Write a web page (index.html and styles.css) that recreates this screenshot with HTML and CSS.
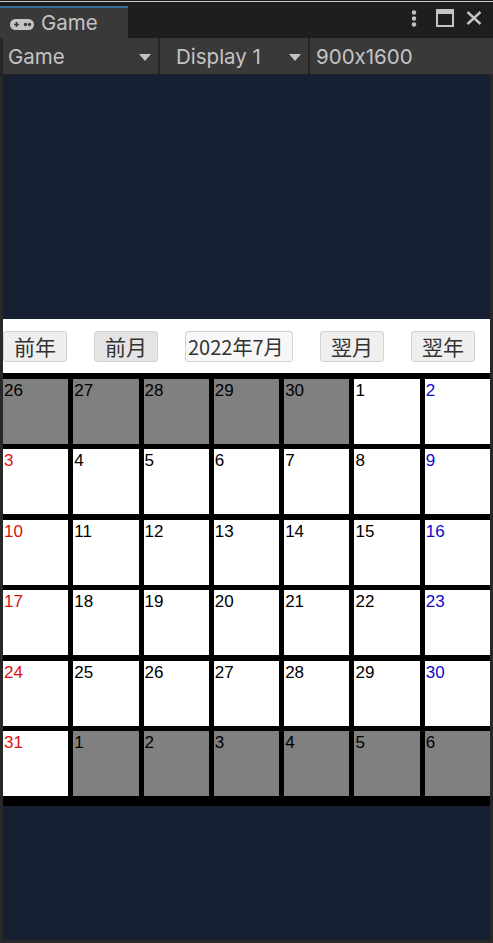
FILE: index.html
```html
<!DOCTYPE html>
<html lang="ja">
<head>
<meta charset="utf-8">
<title>Game</title>
<link rel="stylesheet" href="styles.css">
</head>
<body>
<div class="window">
  <div class="topline"></div>
  <div class="tabbar">
    <div class="tab">
      <svg class="pad" width="24" height="11" viewBox="0 0 24 11">
        <rect x="0" y="0" width="24" height="11" rx="5.5" fill="#c4c4c4"/>
        <path d="M4 5.5h5M6.5 3v5" stroke="#393939" stroke-width="1.6"/>
        <circle cx="15.5" cy="5.5" r="1.7" fill="#393939"/>
        <circle cx="19.5" cy="5.5" r="1.7" fill="#393939"/>
      </svg>
      <span class="tab-label">Game</span>
    </div>
    <div class="tab-actions">
      <svg class="kebab" width="6" height="17" viewBox="0 0 6 17">
        <circle cx="3" cy="2.5" r="2.2" fill="#c4c4c4"/>
        <circle cx="3" cy="8.5" r="2.2" fill="#c4c4c4"/>
        <circle cx="3" cy="14.5" r="2.2" fill="#c4c4c4"/>
      </svg>
      <svg class="maxi" width="18" height="18" viewBox="0 0 18 18">
        <rect x="1" y="1" width="16" height="16" fill="none" stroke="#c4c4c4" stroke-width="2"/>
        <rect x="1" y="1" width="16" height="4" fill="#c4c4c4"/>
      </svg>
      <svg class="close" width="16" height="14" viewBox="0 0 16 14">
        <path d="M1.5 1L14.5 13M14.5 1L1.5 13" stroke="#c4c4c4" stroke-width="2.4"/>
      </svg>
    </div>
  </div>
  <div class="toolbar">
    <div class="dd dd-game"><span>Game</span><span class="arrow"></span></div>
    <div class="dd dd-display"><span>Display 1</span><span class="arrow"></span></div>
    <div class="res">900x1600</div>
  </div>
  <div class="view">
    <div class="sky"></div>
    <div class="nav">
      <div class="btn">前年</div>
      <div class="btn hover">前月</div>
      <div class="field">2022年7月</div>
      <div class="btn">翌月</div>
      <div class="btn">翌年</div>
    </div>
    <div class="grid">
      <div class="cell off">26</div>
      <div class="cell off">27</div>
      <div class="cell off">28</div>
      <div class="cell off">29</div>
      <div class="cell off">30</div>
      <div class="cell">1</div>
      <div class="cell sat">2</div>

      <div class="cell sun">3</div>
      <div class="cell">4</div>
      <div class="cell">5</div>
      <div class="cell">6</div>
      <div class="cell">7</div>
      <div class="cell">8</div>
      <div class="cell sat">9</div>

      <div class="cell sun">10</div>
      <div class="cell">11</div>
      <div class="cell">12</div>
      <div class="cell">13</div>
      <div class="cell">14</div>
      <div class="cell">15</div>
      <div class="cell sat">16</div>

      <div class="cell sun">17</div>
      <div class="cell">18</div>
      <div class="cell">19</div>
      <div class="cell">20</div>
      <div class="cell">21</div>
      <div class="cell">22</div>
      <div class="cell sat">23</div>

      <div class="cell sun">24</div>
      <div class="cell">25</div>
      <div class="cell">26</div>
      <div class="cell">27</div>
      <div class="cell">28</div>
      <div class="cell">29</div>
      <div class="cell sat">30</div>

      <div class="cell sun">31</div>
      <div class="cell off">1</div>
      <div class="cell off">2</div>
      <div class="cell off">3</div>
      <div class="cell off">4</div>
      <div class="cell off">5</div>
      <div class="cell off">6</div>
    </div>
  </div>
</div>
</body>
</html>
```

FILE: styles.css
```css
* { box-sizing: border-box; }
html, body { margin: 0; padding: 0; background: #282828; }

.window {
  width: 493px;
  height: 943px;
  display: flex;
  flex-direction: column;
  background: #282828;
  overflow: hidden;
  font-family: Inter, "Noto Sans", sans-serif;
  font-feature-settings: "calt" 0;
  color: #c4c4c4;
}

.topline {
  height: 2px;
  border-top: 1px solid #1c1c1c;
  background: #c9c9c9;
  flex: none;
}

.tabbar {
  height: 36px;
  flex: none;
  background: #1e1e1e;
  display: flex;
  align-items: flex-end;
}

.tab {
  width: 128px;
  height: 32px;
  background: #393939;
  border-top: 2px solid #3a6c9e;
  display: flex;
  align-items: center;
  padding-left: 10px;
  gap: 7px;
}
.pad { flex: none; margin-top: 2px; }
.tab-label { font-size: 20.5px; line-height: 1; margin-top: 1px; }

.tab-actions {
  margin-left: auto;
  align-self: stretch;
  display: flex;
  align-items: center;
  padding-right: 11px;
  padding-bottom: 4px;
}
.kebab { margin-right: 19px; }
.maxi { margin-right: 12px; }

.toolbar {
  height: 37px;
  flex: none;
  background: #393939;
  border-left: 3px solid #262626;
  border-bottom: 1px solid #232323;
  display: flex;
  font-size: 20.5px;
  line-height: 1;
}

.dd {
  display: flex;
  align-items: center;
  border-right: 2px solid #252525;
  padding-top: 2px;
}
.dd-game { width: 157px; padding-left: 5px; }
.dd-display { width: 150px; padding-left: 16px; }
.dd span:first-child { flex: 1; }
.arrow {
  width: 0;
  height: 0;
  border-left: 6px solid transparent;
  border-right: 6px solid transparent;
  border-top: 7px solid #c4c4c4;
  margin-right: 7px;
}
.res {
  display: flex;
  align-items: center;
  padding-left: 6px;
  padding-top: 2px;
}

.view {
  flex: 1;
  margin: 0 3px 3px 3px;
  background: #172033;
  display: flex;
  flex-direction: column;
}
.sky { height: 244px; flex: none; }

.nav {
  height: 54px;
  flex: none;
  background: #ffffff;
  display: flex;
  gap: 27px;
  padding-top: 12px;
  align-items: flex-start;
  font-family: "Noto Sans CJK JP", sans-serif;
  color: #323232;
}
.btn, .field {
  height: 31px;
  border: 1px solid #d2d2d2;
  border-radius: 3px;
  font-size: 21px;
  line-height: 29px;
  white-space: nowrap;
  overflow: hidden;
}
.btn {
  width: 64px;
  background: #efefef;
  text-align: center;
}
.btn.hover { background: #e4e4e4; }
.field {
  width: 108px;
  background: #f7f7f7;
  padding-left: 2px;
  font-size: 20px;
}

.grid {
  flex: none;
  background: #000;
  display: grid;
  grid-template-columns: repeat(7, 1fr);
  grid-auto-rows: 65px;
  column-gap: 5px;
  row-gap: 5.4px;
  padding: 6px 0 10px 0;
}
.cell {
  background: #fff;
  font-family: "Liberation Sans", Arial, sans-serif;
  font-size: 17px;
  line-height: 20px;
  padding: 2px 0 0 1px;
  color: #000;
}
.cell.off { background: #808080; }
.cell.sun { color: #e01010; }
.cell.sat { color: #0c0ccc; }
```
